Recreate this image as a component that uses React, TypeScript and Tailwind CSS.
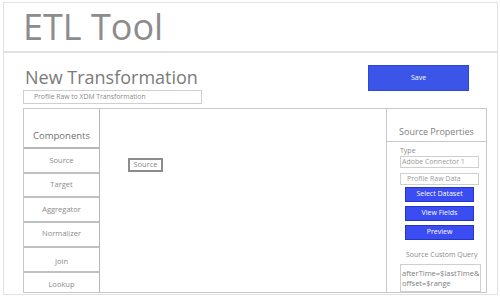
const font = { fontFamily: '"Open Sans", "Noto Sans", sans-serif' };

function Components() {
  const items = [
    { name: "Source", h: "h-[25px]", pad: "items-center" },
    { name: "Target", h: "h-[24px]", pad: "items-center" },
    { name: "Aggregator", h: "h-[25px]", pad: "items-center" },
    { name: "Normalizer", h: "h-[25px]", pad: "items-start pt-[5px]" },
    { name: "Join", h: "h-[25px]", pad: "items-end pb-[4px]" },
    { name: "Lookup", h: "flex-1", pad: "items-end pb-[2px]" },
  ];
  return (
    <div className="w-[76px] flex flex-col border-r border-[#b5b5b5]">
      <div className="h-[40px] flex items-end justify-center pb-[4px] text-[9.5px] text-[#707070] border-b-2 border-[#b8b8b8]">
        Components
      </div>
      {items.map((item, i) => (
        <div
          key={item.name}
          className={`${item.h} flex justify-center ${item.pad} text-[7.5px] text-[#8a8a8a] ${
            i < items.length - 1 ? "border-b-2 border-[#c0c0c0]" : ""
          }`}
        >
          {item.name}
        </div>
      ))}
    </div>
  );
}

function SourceProperties() {
  return (
    <div className="w-[100px] flex flex-col border-l border-[#c8c8c8]">
      <div className="h-[33px] flex items-end justify-center pb-[3px] text-[9px] text-[#808080] border-b border-[#c8c8c8]">
        Source Properties
      </div>
      <div className="pl-[13px] pt-[4px] flex flex-col">
        <div className="text-[7px] text-[#8a8a8a] leading-[10px]">Type</div>
        <div className="w-[79px] h-[12px] border border-[#cfcfcf] text-[7px] text-[#9a9a9a] leading-[10px] pl-[1px]">
          Adobe Connector 1
        </div>
        <div className="mt-[5px] w-[79px] h-[12px] border border-[#cfcfcf] text-[7px] text-[#9a9a9a] leading-[10px] pl-[6px]">
          Profile Raw Data
        </div>
        <div className="ml-[5px] mt-[2px] flex flex-col gap-[4px]">
          {["Select Dataset", "View Fields", "Preview"].map((b) => (
            <div
              key={b}
              className="w-[69px] h-[15px] bg-[#3a4cf2] border border-[#2336c8] text-white text-[7px] font-medium flex items-center justify-center"
            >
              {b}
            </div>
          ))}
        </div>
        <div className="mt-[10px] ml-[6px] text-[7px] text-[#8a8a8a] leading-[10px]">
          Source Custom Query
        </div>
        <div className="mt-[4px] w-[81px] h-[28px] border border-[#cfcfcf] text-[7.5px] text-[#808080] leading-[10px] pl-[1px] pt-[3px]">
          afterTime=$lastTime&amp;
          <br />
          offset=$range
        </div>
      </div>
    </div>
  );
}

export default function App() {
  return (
    <div className="w-[500px] h-[297px] bg-white pt-[2px] pl-[3px]" style={font}>
      <div className="w-[495px] h-[293px] border border-[#e2e2e2] flex flex-col">
        <header className="h-[50px] shrink-0 border-b-2 border-[#e0e0e0] flex items-center pl-[19px] text-[36px] leading-none text-[#8c8c8c]">
          ETL Tool
        </header>
        <div className="flex-1 flex flex-col pl-[19px] pr-[10px]">
          <div className="flex justify-between">
            <div className="flex flex-col">
              <div className="mt-[13px] ml-[2px] text-[18px] leading-[23px] text-[#7a7a7a]">
                New Transformation
              </div>
              <div className="mt-[1px] w-[179px] h-[14px] border border-[#cfcfcf] text-[6.8px] leading-[12px] text-[#8a8a8a] pl-[10px]">
                Profile Raw to XDM Transformation
              </div>
            </div>
            <button className="mt-[12px] mr-[18px] w-[101px] h-[26px] bg-[#3a55e8] border border-[#2f47d8] text-white text-[7px]">
              Save
            </button>
          </div>
          <div className="mt-[4px] h-[185px] flex border border-[#c8c8c8]">
            <Components />
            <div className="flex-1 relative">
              <div className="absolute left-[28px] top-[49px] w-[35px] h-[14px] border-2 border-[#8c8c8c] text-[7.5px] text-[#8a8a8a] flex items-center justify-center">
                Source
              </div>
            </div>
            <SourceProperties />
          </div>
        </div>
      </div>
    </div>
  );
}
